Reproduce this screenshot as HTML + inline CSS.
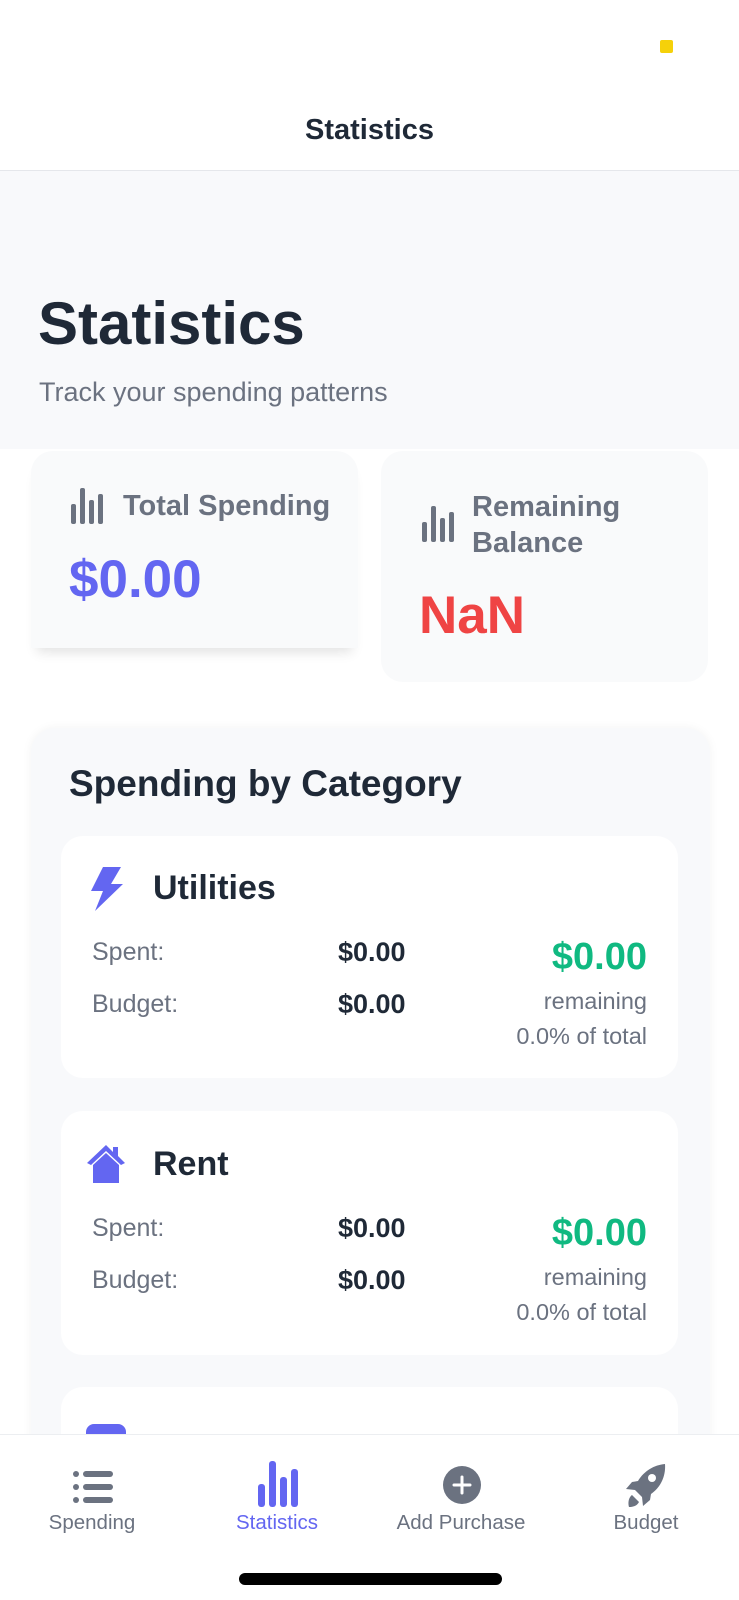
<!DOCTYPE html>
<html><head><meta charset="utf-8"><style>
*{box-sizing:border-box;margin:0;padding:0}
html,body{width:739px;height:1600px;overflow:hidden}
body{background:#f8f9fb;font-family:"Liberation Sans",sans-serif;position:relative;color:#1f2937}
.abs{position:absolute}
.hdr{left:0;top:0;width:739px;height:171px;background:#fff;border-bottom:1px solid #e5e7eb}
.card{background:#fff;border-radius:22px}
.lbl{color:#6b7280;font-size:25px}
.val{color:#1f2937;font-size:27px;font-weight:bold}
.tab{position:absolute;top:1434px;height:166px;background:#fff;left:0;width:739px;border-top:1px solid #eceef1}
.tl{position:absolute;top:1511px;font-size:20.5px;color:#6b7280;text-align:center;width:200px}
.sm{font-size:23.5px}
.gr{font-size:38px;font-weight:bold;color:#10b981}
</style></head><body>
<div class="abs hdr"></div>
<div class="abs" style="left:660px;top:40px;width:13px;height:13px;background:#f5d10a;border-radius:2px"></div>
<div class="abs" style="left:0;top:114px;width:739px;text-align:center;font-size:29px;font-weight:bold;color:#1f2937">Statistics</div>
<div class="abs" style="left:38px;top:289px;font-size:60px;font-weight:bold;color:#1f2937">Statistics</div>
<div class="abs" style="left:39px;top:377px;font-size:27px;color:#6b7280">Track your spending patterns</div>
<div class="abs" style="left:0;top:449px;width:739px;height:1151px;background:#fff"></div>
<div class="abs card" style="left:31px;top:451px;width:327px;height:197px;background:#f9fafb;border-radius:22px 22px 0 0;box-shadow:0 10px 12px -6px rgba(0,0,0,.12)"></div>
<div class="abs card" style="left:381px;top:451px;width:327px;height:231px;background:#f9fafb"></div>
<svg class="abs" style="left:71px;top:488px" width="32" height="36" viewBox="0 0 32 36" fill="#6b7280"><rect x="0" y="16" width="5" height="20" rx="2"/><rect x="9" y="0" width="5" height="36" rx="2"/><rect x="18" y="12" width="5" height="24" rx="2"/><rect x="27" y="6" width="5" height="30" rx="2"/></svg>
<div class="abs" style="left:123px;top:490px;font-size:29px;font-weight:bold;color:#6b7280">Total Spending</div>
<div class="abs" style="left:69px;top:549px;font-size:53px;font-weight:bold;color:#6366f1">$0.00</div>
<svg class="abs" style="left:422px;top:506px" width="32" height="36" viewBox="0 0 32 36" fill="#6b7280"><rect x="0" y="16" width="5" height="20" rx="2"/><rect x="9" y="0" width="5" height="36" rx="2"/><rect x="18" y="12" width="5" height="24" rx="2"/><rect x="27" y="6" width="5" height="30" rx="2"/></svg>
<div class="abs" style="left:472px;top:489px;font-size:29px;font-weight:bold;color:#6b7280;line-height:36px">Remaining<br>Balance</div>
<div class="abs" style="left:419px;top:585px;font-size:53px;font-weight:bold;color:#ef4444">NaN</div>
<div class="abs" style="left:31px;top:728px;width:679px;height:860px;background:#f8f9fb;border-radius:24px;box-shadow:0 0 10px rgba(0,0,0,.05)"></div>
<div class="abs" style="left:69px;top:763px;font-size:37px;font-weight:bold;color:#1f2937">Spending by Category</div>

<div class="abs card" style="left:61px;top:836px;width:617px;height:242px"></div>
<svg class="abs" style="left:89px;top:867px" width="36" height="44" viewBox="0 0 36 44"><path d="M14 0 L32 0 L22 17 L34 17 L6 44 L14 24 L2 24 Z" fill="#6366f1"/></svg>
<div class="abs" style="left:153px;top:869px;font-size:34px;font-weight:bold">Utilities</div>
<div class="abs lbl" style="left:92px;top:938px">Spent:</div>
<div class="abs val" style="left:338px;top:937px">$0.00</div>
<div class="abs lbl" style="left:92px;top:990px">Budget:</div>
<div class="abs val" style="left:338px;top:989px">$0.00</div>
<div class="abs gr" style="right:92px;top:936px">$0.00</div>
<div class="abs lbl sm" style="right:92px;top:988px">remaining</div>
<div class="abs lbl sm" style="right:92px;top:1023px">0.0% of total</div>

<div class="abs card" style="left:61px;top:1111px;width:617px;height:244px"></div>
<svg class="abs" style="left:85px;top:1143px" width="42" height="40" viewBox="0 0 42 40"><path d="M21 2 L2 20 L6 22 L21 8 L36 22 L40 20 L33 13 L33 4 L28 4 L28 9 Z" fill="#6366f1"/><path d="M8 22 L21 10 L34 22 L34 40 L8 40 Z" fill="#6366f1"/></svg>
<div class="abs" style="left:153px;top:1145px;font-size:34px;font-weight:bold">Rent</div>
<div class="abs lbl" style="left:92px;top:1214px">Spent:</div>
<div class="abs val" style="left:338px;top:1213px">$0.00</div>
<div class="abs lbl" style="left:92px;top:1266px">Budget:</div>
<div class="abs val" style="left:338px;top:1265px">$0.00</div>
<div class="abs gr" style="right:92px;top:1212px">$0.00</div>
<div class="abs lbl sm" style="right:92px;top:1264px">remaining</div>
<div class="abs lbl sm" style="right:92px;top:1299px">0.0% of total</div>

<div class="abs card" style="left:61px;top:1387px;width:617px;height:180px"></div>
<div class="abs" style="left:86px;top:1424px;width:40px;height:14px;background:#6366f1;border-radius:8px 8px 0 0"></div>

<div class="tab"></div>
<svg class="abs" style="left:73px;top:1469px" width="40" height="36" viewBox="0 0 40 36" fill="#6b7280"><circle cx="3" cy="5" r="3"/><circle cx="3" cy="18" r="3"/><circle cx="3" cy="31" r="3"/><rect x="10" y="2" width="30" height="6" rx="3"/><rect x="10" y="15" width="30" height="6" rx="3"/><rect x="10" y="28" width="30" height="6" rx="3"/></svg>
<svg class="abs" style="left:258px;top:1461px" width="40" height="46" viewBox="0 0 40 46" fill="#6366f1"><rect x="0" y="23" width="7" height="23" rx="3"/><rect x="11" y="0" width="7" height="46" rx="3"/><rect x="22" y="16" width="7" height="30" rx="3"/><rect x="33" y="8" width="7" height="38" rx="3"/></svg>
<svg class="abs" style="left:443px;top:1466px" width="38" height="38" viewBox="0 0 38 38"><circle cx="19" cy="19" r="19" fill="#6b7280"/><path d="M19 11v16M11 19h16" stroke="#fff" stroke-width="3" stroke-linecap="round"/></svg>
<svg class="abs" style="left:624px;top:1463px" width="44" height="46" viewBox="0 0 44 46"><path d="M41 1 C30 2 20 8 14 18 L8 19 L2 26 L11 27 L18 34 L19 43 L26 37 L27 31 C36 25 42 14 41 1 Z" fill="#6b7280"/><circle cx="28" cy="15" r="4" fill="#fff"/><path d="M8 32 C4 35 4 41 5 44 C9 44 13 43 15 39 Z" fill="#6b7280"/></svg>
<div class="tl" style="left:-8px">Spending</div>
<div class="tl" style="left:177px;color:#6366f1">Statistics</div>
<div class="tl" style="left:361px">Add Purchase</div>
<div class="tl" style="left:546px">Budget</div>
<div class="abs" style="left:239px;top:1573px;width:263px;height:12px;background:#000;border-radius:6px"></div>
</body></html>
